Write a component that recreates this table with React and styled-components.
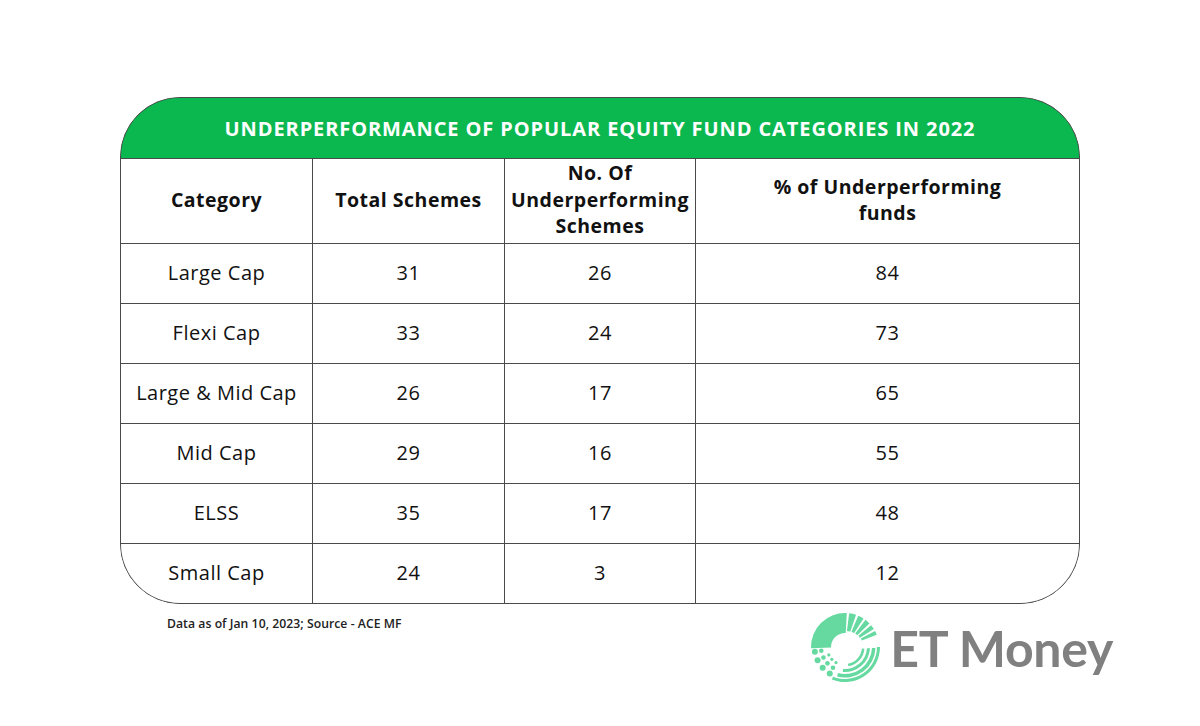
import React from "react";
import styled, { createGlobalStyle } from "styled-components";

const Global = createGlobalStyle`
  html, body { margin: 0; padding: 0; background: #ffffff; }
  body { font-family: "Open Sans", "Lato", sans-serif; color: #111; }
`;

const Page = styled.div`
  width: 1200px;
  height: 726px;
  box-sizing: border-box;
  padding: 97px 0 0 120px;
  display: flex;
  flex-direction: column;
`;

const Card = styled.div`
  width: 960px;
  box-sizing: border-box;
  border: 1px solid #4a4a4a;
  border-radius: 60px;
  overflow: hidden;
  background: #4a4a4a;
  display: flex;
  flex-direction: column;
  gap: 1px;
`;

const TitleBar = styled.div`
  height: 60px;
  background: #0bb74f;
  color: #ffffff;
  display: flex;
  align-items: center;
  justify-content: center;
  font-weight: 700;
  font-size: 20px;
  letter-spacing: 0.9px;
`;

const Grid = styled.div`
  display: grid;
  grid-template-columns: 191px 191px 190px 1fr;
  grid-auto-rows: 59px;
  grid-template-rows: 84px;
  gap: 1px;
`;

const Cell = styled.div`
  background: #ffffff;
  display: flex;
  align-items: center;
  justify-content: center;
  text-align: center;
  font-size: ${(p) => (p.$head ? "19.5px" : "20px")};
  font-weight: ${(p) => (p.$head ? 700 : 400)};
  letter-spacing: 0.5px;
  line-height: ${(p) => (p.$head ? "26.5px" : "22px")};
  color: #111;
  padding-bottom: ${(p) => (p.$head ? "2px" : "2px")};
  box-sizing: border-box;
`;

const BottomRow = styled.div`
  width: 993px;
  display: flex;
  justify-content: space-between;
  align-items: flex-start;
  padding-left: 47px;
  box-sizing: border-box;
`;

const Note = styled.div`
  margin-top: 11px;
  font-size: 12.2px;
  letter-spacing: 0.05px;
  font-weight: 600;
  color: #222;
`;

const Logo = styled.div`
  margin-top: 8px;
  display: flex;
  align-items: center;
  gap: 10px;
`;

const LogoText = styled.span`
  font-family: "Lato", sans-serif;
  font-weight: 700;
  font-size: 50px;
  color: #808080;
  letter-spacing: -0.3px;
  line-height: 1;
`;

const rad = (d) => (d * Math.PI) / 180;
const pt = (cx, cy, r, a) => [cx + r * Math.cos(rad(a)), cy + r * Math.sin(rad(a))];
function sector(cx, cy, r1, r2, a1, a2) {
  const [x1, y1] = pt(cx, cy, r2, a1);
  const [x2, y2] = pt(cx, cy, r2, a2);
  const [x3, y3] = pt(cx, cy, r1, a2);
  const [x4, y4] = pt(cx, cy, r1, a1);
  const large = a2 - a1 > 180 ? 1 : 0;
  return `M${x1} ${y1} A${r2} ${r2} 0 ${large} 1 ${x2} ${y2} L${x3} ${y3} A${r1} ${r1} 0 ${large} 0 ${x4} ${y4} Z`;
}

function LogoMark() {
  const c = 35;
  const col = "#66d9a0";
  const wedges = [];
  const starts = [277, 293, 307, 320, 332];
  const widths = [12, 10, 9, 8, 7];
  starts.forEach((s, i) => wedges.push(sector(c, c, 16 + i * 0.5, 34, s, s + widths[i])));
  const arcs = [
    [17, 19.5, 5, 80],
    [22, 25, 3, 95],
    [27, 30.5, 2, 105],
    [32, 35, 0, 112],
  ];
  const dots = [];
  const angs = [120, 137, 154, 171];
  angs.forEach((a) => {
    [[18, 1.6], [24, 2.3], [30.5, 3]].forEach(([r, s], j) => {
      if (a > 160 && j === 0) return;
      const [x, y] = pt(c, c, r, a);
      dots.push([x, y, s]);
    });
  });
  return (
    <svg width="70" height="72" viewBox="0 0 70 72">
      <path d={sector(c, c, 14, 34, 178, 273)} fill={col} />
      {wedges.map((d, i) => (
        <path key={i} d={d} fill={col} />
      ))}
      {arcs.map(([r1, r2, a1, a2], i) => (
        <path key={"a" + i} d={sector(c, c, r1, r2, a1, a2)} fill={col} />
      ))}
      {dots.map(([x, y, s], i) => (
        <circle key={"d" + i} cx={x} cy={y} r={s} fill={col} />
      ))}
    </svg>
  );
}

const rows = [
  ["Large Cap", "31", "26", "84"],
  ["Flexi Cap", "33", "24", "73"],
  ["Large & Mid Cap", "26", "17", "65"],
  ["Mid Cap", "29", "16", "55"],
  ["ELSS", "35", "17", "48"],
  ["Small Cap", "24", "3", "12"],
];

export default function App() {
  return (
    <>
      <Global />
      <Page>
        <Card>
          <TitleBar>UNDERPERFORMANCE OF POPULAR EQUITY FUND CATEGORIES IN 2022</TitleBar>
          <Grid>
            <Cell $head>Category</Cell>
            <Cell $head>Total Schemes</Cell>
            <Cell $head>
              No. Of
              <br />
              Underperforming
              <br />
              Schemes
            </Cell>
            <Cell $head>
              % of Underperforming
              <br />
              funds
            </Cell>
            {rows.map((r) =>
              r.map((v, i) => <Cell key={r[0] + i}>{v}</Cell>)
            )}
          </Grid>
        </Card>
        <BottomRow>
          <Note>Data as of Jan 10, 2023; Source - ACE MF</Note>
          <Logo>
            <LogoMark />
            <LogoText>ET Money</LogoText>
          </Logo>
        </BottomRow>
      </Page>
    </>
  );
}
